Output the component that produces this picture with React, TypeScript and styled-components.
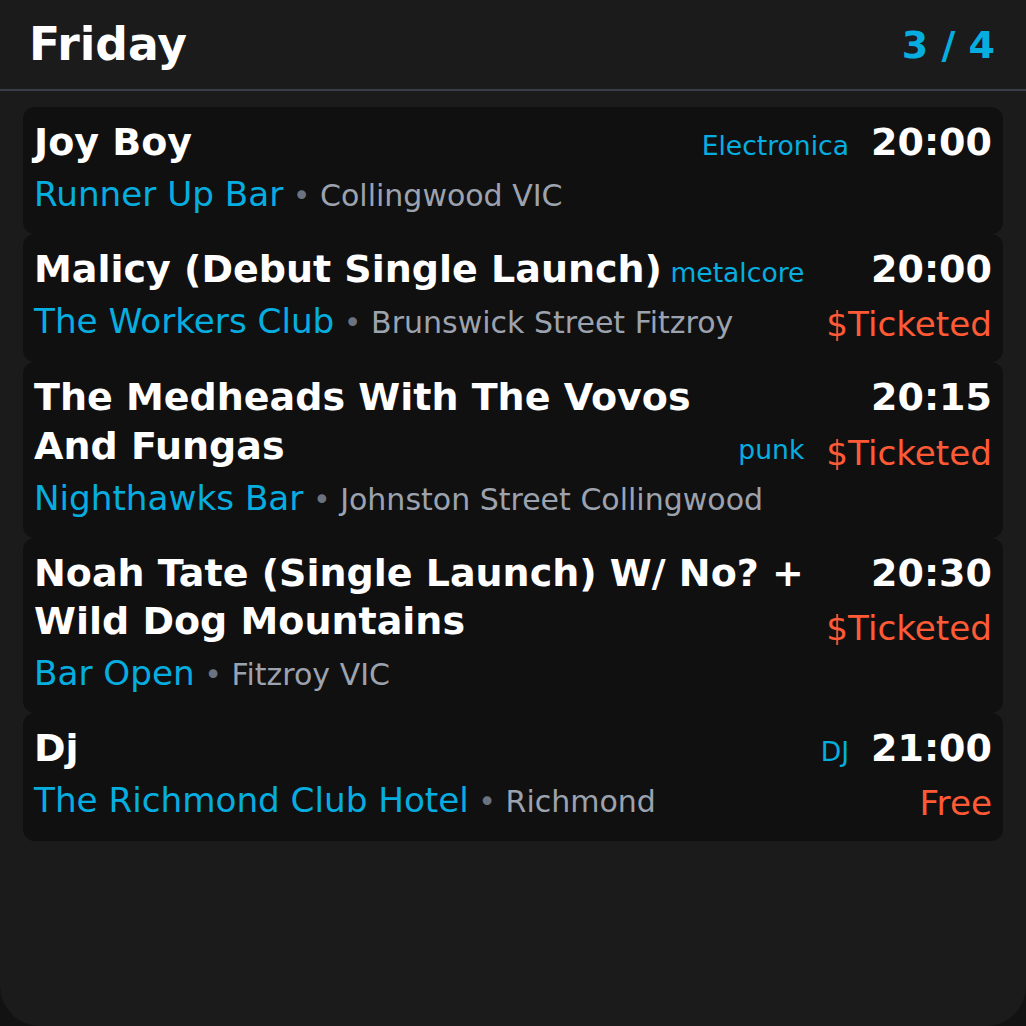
import React, { FC } from "react";
import styled, { createGlobalStyle } from "styled-components";

const GlobalStyle = createGlobalStyle`
  html, body {
    margin: 0;
    padding: 0;
    background: #121212;
  }
  body {
    font-family: "DejaVu Sans", Verdana, sans-serif;
  }
  * {
    box-sizing: border-box;
  }
`;

const Panel = styled.div`
  min-height: 1026px;
  background: #1b1b1b;
  border-bottom-left-radius: 40px;
  border-bottom-right-radius: 40px;
  overflow: hidden;
`;

const Header = styled.div`
  display: flex;
  justify-content: space-between;
  align-items: center;
  height: 91px;
  padding: 0 31px 0 29px;
  border-bottom: 2px solid #383d48;
`;

const DayTitle = styled.h1`
  margin: 0;
  font-size: 45.6px;
  font-weight: bold;
  color: #ffffff;
`;

const Counter = styled.span`
  font-size: 38px;
  font-weight: bold;
  color: #06aee0;
`;

const List = styled.div`
  display: flex;
  flex-direction: column;
  padding: 16px 23px;
`;

const Card = styled.div`
  display: flex;
  gap: 22px;
  padding: 11px 11px 16px 11px;
  background: #101010;
  border-radius: 12px;
`;

const Main = styled.div`
  flex: 1;
  min-width: 0;
`;

const TitleRow = styled.div`
  display: flex;
  justify-content: space-between;
  align-items: last baseline;
  column-gap: 6px;
`;

const Title = styled.div`
  font-size: 38px;
  line-height: 48.3px;
  font-weight: bold;
  color: #ffffff;
`;

const Genre = styled.span`
  font-size: 26.6px;
  line-height: 1.25;
  color: #06aee0;
  white-space: nowrap;
`;

const VenueLine = styled.div`
  margin-top: 7px;
  font-size: 34.2px;
  line-height: 42.75px;
`;

const Venue = styled.span`
  color: #06aee0;
`;

const Place = styled.span`
  font-size: 30px;
  color: #9ca3af;
`;

const Dot = styled.span`
  color: #6b7280;
`;

const Side = styled.div`
  display: flex;
  flex-direction: column;
  align-items: flex-end;
  flex-shrink: 0;
`;

const Time = styled.div`
  font-size: 38px;
  line-height: 48.3px;
  font-weight: bold;
  color: #ffffff;
`;

const Price = styled.div`
  margin-top: 10px;
  font-size: 34.2px;
  line-height: 43px;
  color: #ff5a36;
  white-space: nowrap;
`;

type Gig = {
  title: string;
  genre?: string;
  venue: string;
  place: string;
  time: string;
  price?: string;
};

const gigs: Gig[] = [
  {
    title: "Joy Boy",
    genre: "Electronica",
    venue: "Runner Up Bar",
    place: "Collingwood VIC",
    time: "20:00",
  },
  {
    title: "Malicy (Debut Single Launch)",
    genre: "metalcore",
    venue: "The Workers Club",
    place: "Brunswick Street Fitzroy",
    time: "20:00",
    price: "$Ticketed",
  },
  {
    title: "The Medheads With The Vovos And Fungas",
    genre: "punk",
    venue: "Nighthawks Bar",
    place: "Johnston Street Collingwood",
    time: "20:15",
    price: "$Ticketed",
  },
  {
    title: "Noah Tate (Single Launch) W/ No? + Wild Dog Mountains",
    venue: "Bar Open",
    place: "Fitzroy VIC",
    time: "20:30",
    price: "$Ticketed",
  },
  {
    title: "Dj",
    genre: "DJ",
    venue: "The Richmond Club Hotel",
    place: "Richmond",
    time: "21:00",
    price: "Free",
  },
];

const GigCard: FC<{ gig: Gig }> = ({ gig }) => (
  <Card>
    <Main>
      <TitleRow>
        <Title>{gig.title}</Title>
        {gig.genre && <Genre>{gig.genre}</Genre>}
      </TitleRow>
      <VenueLine>
        <Venue>{gig.venue}</Venue>
        <Place>
          <Dot> • </Dot>
          {gig.place}
        </Place>
      </VenueLine>
    </Main>
    <Side>
      <Time>{gig.time}</Time>
      {gig.price && <Price>{gig.price}</Price>}
    </Side>
  </Card>
);

const App: FC = () => {
  return (
    <>
      <GlobalStyle />
      <Panel>
        <Header>
          <DayTitle>Friday</DayTitle>
          <Counter>3 / 4</Counter>
        </Header>
        <List>
          {gigs.map((gig, index) => (
            <GigCard gig={gig} key={index} />
          ))}
        </List>
      </Panel>
    </>
  );
};

export default App;
